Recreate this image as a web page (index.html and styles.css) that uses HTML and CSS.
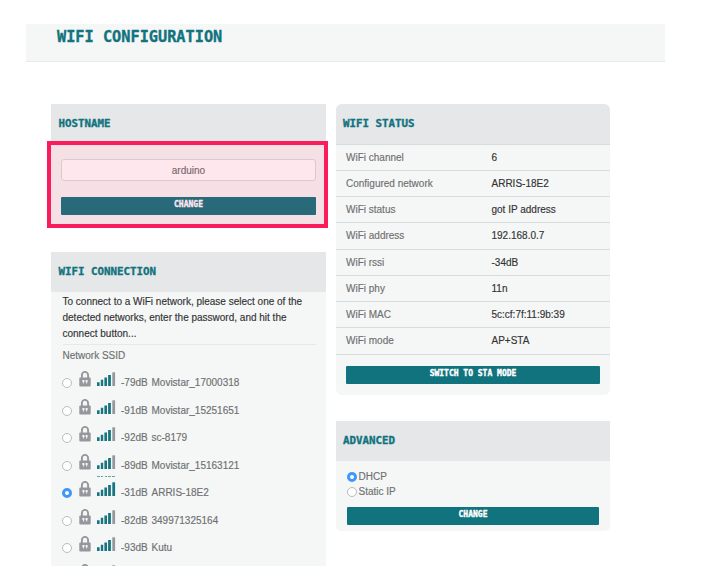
FILE: index.html
```html
<!DOCTYPE html>
<html lang="en">
<head>
<meta charset="utf-8">
<title>WiFi configuration</title>
<link rel="stylesheet" href="styles.css">
</head>
<body>
<svg class="defs" aria-hidden="true">
  <symbol id="lock" viewBox="0 0 12 16">
    <path d="M2.9 8V4.2a3.1 3.3 0 0 1 6.2 0V8" fill="none" stroke="#95979c" stroke-width="1.9"/>
    <rect x=".3" y="6.4" width="11.4" height="9.2" rx="1" fill="#95979c"/>
    <path d="M3.4 9h2v1.8l-.7 1.8h-.9l.4-1.6h-.8zM6.6 9h2v1.8l-.7 1.8H7l.4-1.6h-.8z" fill="#f5f7f7"/>
  </symbol>
  <symbol id="signal" viewBox="0 0 19 14">
    <path d="M0 10.3h2.6V14H0zM3.8 7.8h2.4V14H3.8zM7.4 5.6H10V14H7.4zM11.1 3h2.8v11h-2.8z" fill="#16757f"/>
    <path d="M15.3.3h2.8V14h-2.8z" fill="currentColor"/>
  </symbol>
</svg>
<header class="page-header"><h1>WIFI CONFIGURATION</h1></header>
<main class="columns">
  <div class="column">
    <section class="card hostname">
      <h2>HOSTNAME</h2>
      <form class="host-form">
        <input class="host-input" type="text" value="arduino">
        <button class="button" type="button">CHANGE</button>
      </form>
      <div class="highlight"></div>
    </section>
    <section class="card connection">
      <h2>WIFI CONNECTION</h2>
      <div class="connect-body">
        <p class="intro">To connect to a WiFi network, please select one of the detected networks, enter the password, and hit the connect button...</p>
        <p class="label">Network SSID</p>
        <div class="network"><i class="radio"></i><svg class="lock"><use href="#lock"/></svg><svg class="signal"><use href="#signal"/></svg><span class="db">-79dB</span><span>Movistar_17000318</span></div>
        <div class="network"><i class="radio"></i><svg class="lock"><use href="#lock"/></svg><svg class="signal"><use href="#signal"/></svg><span class="db">-91dB</span><span>Movistar_15251651</span></div>
        <div class="network"><i class="radio"></i><svg class="lock"><use href="#lock"/></svg><svg class="signal"><use href="#signal"/></svg><span class="db">-92dB</span><span>sc-8179</span></div>
        <div class="network"><i class="radio"></i><svg class="lock"><use href="#lock"/></svg><svg class="signal"><use href="#signal"/></svg><span class="db">-89dB</span><span>Movistar_15163121</span></div>
        <div class="network"><i class="radio on"></i><svg class="lock"><use href="#lock"/></svg><svg class="signal full"><use href="#signal"/></svg><span class="db">-31dB</span><span>ARRIS-18E2</span></div>
        <div class="network"><i class="radio"></i><svg class="lock"><use href="#lock"/></svg><svg class="signal"><use href="#signal"/></svg><span class="db">-82dB</span><span>349971325164</span></div>
        <div class="network"><i class="radio"></i><svg class="lock"><use href="#lock"/></svg><svg class="signal"><use href="#signal"/></svg><span class="db">-93dB</span><span>Kutu</span></div>
        <div class="network"><i class="radio"></i><svg class="lock"><use href="#lock"/></svg><svg class="signal"><use href="#signal"/></svg></div>
      </div>
    </section>
  </div>
  <div class="column">
    <section class="card status">
      <h2>WIFI STATUS</h2>
      <dl>
        <div><dt>WiFi channel</dt><dd>6</dd></div>
        <div><dt>Configured network</dt><dd>ARRIS-18E2</dd></div>
        <div><dt>WiFi status</dt><dd>got IP address</dd></div>
        <div><dt>WiFi address</dt><dd>192.168.0.7</dd></div>
        <div><dt>WiFi rssi</dt><dd>-34dB</dd></div>
        <div><dt>WiFi phy</dt><dd>11n</dd></div>
        <div><dt>WiFi MAC</dt><dd>5c:cf:7f:11:9b:39</dd></div>
        <div><dt>WiFi mode</dt><dd>AP+STA</dd></div>
      </dl>
      <button class="button" type="button">SWITCH TO STA MODE</button>
    </section>
    <section class="card advanced">
      <h2>ADVANCED</h2>
      <div class="choice"><i class="radio on"></i>DHCP</div>
      <div class="choice"><i class="radio"></i>Static IP</div>
      <button class="button" type="button">CHANGE</button>
    </section>
  </div>
</main>
</body>
</html>
```
FILE: styles.css
```css
* { box-sizing: border-box; }
body {
  margin: 0;
  height: 586px;
  overflow: hidden;
  background: #fff;
  color: #6e7070;
  font: 10px/16px "Liberation Sans", Arial, sans-serif;
  -webkit-text-stroke: .15px;
}
h1, h2, p, dl, dd { margin: 0; }
.defs { display: none; }
.page-header {
  width: 639px;
  height: 38px;
  margin: 24px 0 0 26px;
  padding: 3px 0 0 31px;
  background: #f5f7f7;
  border-bottom: 1px solid #e6eaea;
}
h1, h2, .button {
  font-family: "DejaVu Sans Mono", monospace;
  font-weight: bold;
  -webkit-text-stroke: .35px;
}
h1 { color: #11737e; font-size: 15.25px; line-height: 20px; }
.columns {
  display: grid;
  grid-template-columns: 275px 274px;
  gap: 10px;
  margin: 42px 0 0 51px;
  align-items: start;
}
.column { display: flex; flex-direction: column; }
.card { background: #f5f7f7; }
.card h2 {
  height: 40px;
  padding-left: 7.5px;
  background: #e5e7e8;
  color: #11737e;
  font-size: 10.8px;
  line-height: 39px;
}
.column:last-child h2 { padding-left: 7px; }
.button {
  display: block;
  width: 254px;
  height: 18px;
  padding: 0 0 2px;
  border: 0;
  border-radius: 1px;
  background: #11737e;
  color: #fff;
  font-size: 8px;
  line-height: 16px;
  text-align: center;
}
.hostname { position: relative; height: 122px; margin-bottom: 26px; }
.host-form { padding: 15px 10px 0; }
.host-form .button { width: 255px; }
.host-input {
  display: block;
  width: 255px;
  height: 22px;
  margin-bottom: 16px;
  padding: 0;
  border: 1px solid #dadddd;
  border-radius: 3px;
  background: #fff;
  color: #6e7070;
  font: 10px "Liberation Sans", Arial, sans-serif;
  text-align: center;
}
.highlight {
  position: absolute;
  left: -4px;
  top: 37px;
  width: 281px;
  height: 87px;
  border: 4px solid #f91d5c;
  background: rgba(250, 28, 90, .1);
}
.connection { height: 314px; overflow: hidden; }
.connect-body { padding: 2px 10px 0 11.5px; }
.intro { height: 51px; color: #333; line-height: 15.75px; border-bottom: 1px solid #e5e9e9; }
.label { height: 23px; line-height: 21px; }
.network { display: flex; align-items: flex-start; height: 27.5px; }
.radio {
  flex: none;
  width: 10px;
  height: 10px;
  border: 1px solid #bbb;
  border-radius: 50%;
  background: #fff;
}
.radio.on { border: 3.3px solid #3e98fb; }
.network .radio { margin: 10px 0 0 -.5px; }
.lock { width: 12px; height: 16px; margin: 3px 0 0 6.5px; }
.signal { width: 19px; height: 14px; margin: 4px 5.5px 0 6px; color: #95979c; }
.signal.full { color: #16757f; }
.network:has(.full) { position: relative; }
.network:has(.full)::before {
  content: "";
  position: absolute;
  left: 34.5px;
  top: -2px;
  width: 18px;
  height: 1px;
  background: repeating-linear-gradient(90deg, #63a1a7 0 2.6px, transparent 2.6px 3.8px);
}
.network span { margin-top: 7px; }
.db { width: 30.5px; }
.status { height: 291px; border-radius: 6px; overflow: hidden; margin-bottom: 26px; }
.status h2 { height: 39.5px; }
.status dl div { display: flex; height: 26.25px; padding-left: 10px; border-top: 1px solid #d9dcdc; line-height: 25px; }
.status dl { border-bottom: 1px solid #d9dcdc; }
dt { width: 145.5px; }
dd { color: #333; }
.status .button { margin: 11.5px 0 0 10px; }
.advanced { height: 110px; border-radius: 0 0 5px 5px; padding-bottom: 6px; }
.advanced h2 { margin-bottom: 8px; line-height: 40px; }
.choice { display: flex; align-items: center; height: 15.5px; padding-left: 10.5px; gap: 2px; }
.advanced .button { width: 252px; margin: 7px 0 0 11px; }
```
